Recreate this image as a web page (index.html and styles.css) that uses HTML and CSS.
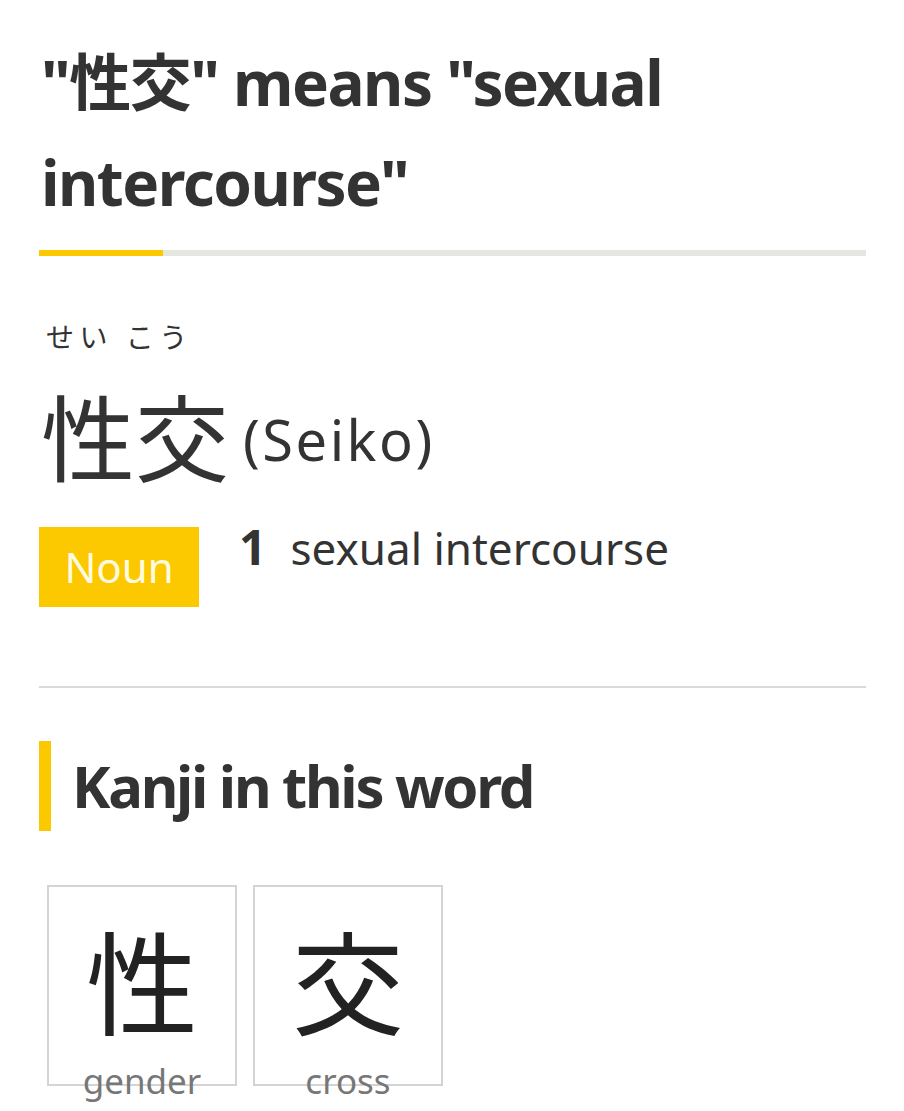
FILE: index.html
```html
<!DOCTYPE html>
<html>
<head>
    <meta name="viewport" content="width=device-width, initial-scale=1.0">
    <title>性交 - Seiko</title>
    <link rel="stylesheet" href="styles.css">
</head>
<body>
    <div class="page">
        <h1 class="title">"性交" means "sexual intercourse"</h1>
        <div class="title-rule"><span class="title-rule-mark"></span></div>

        <div class="word">
            <div class="furigana">せい こう</div>
            <div class="word-line">
                <span class="word-kanji">性交</span>
                <span class="word-romaji">(Seiko)</span>
            </div>
            <div class="meaning">
                <div class="pos">Noun</div>
                <div class="sense"><b>1</b>sexual intercourse</div>
            </div>
        </div>

        <hr class="divider">

        <h2 class="section-title">Kanji in this word</h2>

        <div class="kanji-list">
            <div class="kanji-card">
                <div class="kanji-char">性</div>
                <div class="kanji-label">gender</div>
            </div>
            <div class="kanji-card">
                <div class="kanji-char">交</div>
                <div class="kanji-label">cross</div>
            </div>
        </div>
    </div>
</body>
</html>
```

FILE: styles.css
```css
body {
    margin: 0;
    font-family: "Noto Sans", "Noto Sans CJK JP", sans-serif;
    color: #333;
    background: #fff;
}
.page {
    padding: 32px 38px 60px 39px;
}
.title {
    margin: 0;
    font-size: 62px;
    line-height: 100px;
    font-weight: 700;
    letter-spacing: -1.5px;
    padding-left: 2px;
    width: 680px;
}
.title-rule {
    margin-top: 18px;
    height: 6px;
    background-color: #e6e6e1;
}
.title-rule-mark {
    display: block;
    width: 124px;
    height: 6px;
    background-color: #fcc800;
}
.word {
    padding-top: 63px;
}
.furigana {
    font-size: 28px;
    line-height: 36px;
    padding-left: 7px;
    letter-spacing: 5.5px;
}
.word-line {
    display: flex;
    align-items: center;
    margin-top: 29px;
}
.word-kanji {
    font-size: 94px;
    line-height: 110px;
    padding-left: 2px;
}
.word-romaji {
    font-size: 56px;
    letter-spacing: 2.5px;
    margin-left: 14px;
}
.meaning {
    display: flex;
    align-items: flex-start;
    margin-top: 33px;
}
.pos {
    width: 160px;
    height: 80px;
    line-height: 80px;
    background-color: #fcc800;
    color: #fffbe0;
    font-size: 42px;
    text-align: center;
}
.sense {
    margin-left: 40px;
    margin-top: -4px;
    font-size: 44px;
    line-height: 48px;
}
.sense b {
    margin-right: 24px;
    font-size: 48px;
    font-weight: 700;
}
.divider {
    margin: 79px 0 0 0;
    border: 0;
    height: 2px;
    background-color: #dadada;
}
.section-title {
    margin: 53px 0 0 0;
    border-left: 12px solid #fcc800;
    padding-left: 21px;
    font-size: 58px;
    line-height: 90px;
    font-weight: 700;
    letter-spacing: -2.3px;
}
.kanji-list {
    display: flex;
    gap: 16px;
    margin-top: 54px;
    padding-left: 8px;
}
.kanji-card {
    width: 190px;
    height: 201px;
    box-sizing: border-box;
    border: 2px solid #d4d4d4;
    text-align: center;
}
.kanji-char {
    font-size: 112px;
    line-height: 120px;
    color: #222;
    margin-top: 37px;
}
.kanji-label {
    font-size: 35px;
    line-height: 40px;
    color: #777;
    margin-top: 17px;
}
```
